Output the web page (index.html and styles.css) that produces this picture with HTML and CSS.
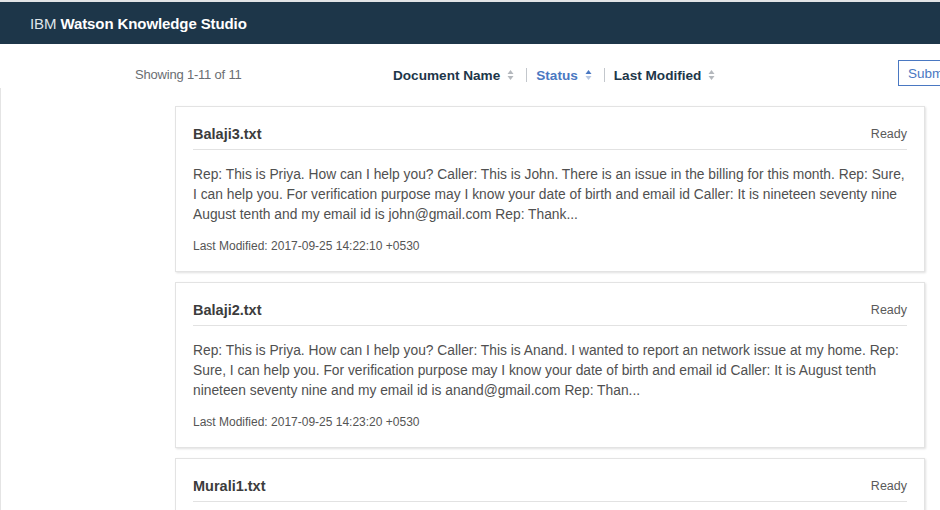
FILE: index.html
```html
<!DOCTYPE html>
<html>
<head>
<meta charset="utf-8">
<link rel="stylesheet" href="styles.css">
</head>
<body>
<header class="topbar">
  <span class="brand"><span class="brand-ibm">IBM</span> <strong>Watson Knowledge Studio</strong></span>
</header>
<div class="toolbar">
  <div class="count">Showing 1-11 of 11</div>
  <div class="sorts">
    <span class="sort">Document Name <svg class="arr" viewBox="0 0 7 12" width="7" height="12"><path d="M3.5 1 L6.5 5 H0.5 Z" fill="#b4b8bd"/><path d="M3.5 11 L6.5 7 H0.5 Z" fill="#b4b8bd"/></svg></span>
    <span class="sep"></span>
    <span class="sort active">Status <svg class="arr" viewBox="0 0 7 12" width="7" height="12"><path d="M3.5 1 L6.5 5 H0.5 Z" fill="#4a78c2"/><path d="M3.5 11 L6.5 7 H0.5 Z" fill="#b8c8e2"/></svg></span>
    <span class="sep"></span>
    <span class="sort">Last Modified <svg class="arr" viewBox="0 0 7 12" width="7" height="12"><path d="M3.5 1 L6.5 5 H0.5 Z" fill="#b4b8bd"/><path d="M3.5 11 L6.5 7 H0.5 Z" fill="#b4b8bd"/></svg></span>
  </div>
  <button class="submit">Submit</button>
</div>
<main class="main">
  <div class="list">
    <article class="card">
      <div class="card-head"><span class="name">Balaji3.txt</span><span class="status">Ready</span></div>
      <p class="body">Rep: This is Priya. How can I help you? Caller: This is John. There is an issue in the billing for this month. Rep: Sure, I can help you. For verification purpose may I know your date of birth and email id Caller: It is nineteen seventy nine August tenth and my email id is john@gmail.com Rep: Thank...</p>
      <div class="meta">Last Modified: 2017-09-25 14:22:10 +0530</div>
    </article>
    <article class="card">
      <div class="card-head"><span class="name">Balaji2.txt</span><span class="status">Ready</span></div>
      <p class="body">Rep: This is Priya. How can I help you? Caller: This is Anand. I wanted to report an network issue at my home. Rep: Sure, I can help you. For verification purpose may I know your date of birth and email id Caller: It is August tenth nineteen seventy nine and my email id is anand@gmail.com Rep: Than...</p>
      <div class="meta">Last Modified: 2017-09-25 14:23:20 +0530</div>
    </article>
    <article class="card">
      <div class="card-head"><span class="name">Murali1.txt</span><span class="status">Ready</span></div>
    </article>
  </div>
</main>
</body>
</html>
```

FILE: styles.css
```css
html, body {
  margin: 0;
  padding: 0;
  background: #ffffff;
  overflow: hidden;
  width: 940px;
  height: 510px;
}
body {
  font-family: "Liberation Sans", Arial, sans-serif;
  color: #4a4a4a;
  border-top: 2px solid #e2e4e6;
  box-sizing: border-box;
}
.topbar {
  height: 42px;
  background: #1d3649;
  display: flex;
  align-items: center;
  padding-left: 30px;
  box-sizing: border-box;
}
.brand {
  color: #ffffff;
  font-size: 15px;
  letter-spacing: -0.1px;
}
.brand-ibm {
  font-weight: 300;
  color: #dfe5ea;
}
.brand strong {
  font-weight: 700;
}
.toolbar {
  height: 44px;
  box-sizing: border-box;
  padding-top: 23px;
  display: flex;
  align-items: flex-start;
  position: relative;
  overflow: hidden;
}
.count {
  margin-left: 135px;
  width: 258px;
  font-size: 13px;
  line-height: 16px;
  color: #6a6e72;
  letter-spacing: -0.2px;
}
.sorts {
  display: flex;
  align-items: center;
  height: 16px;
  font-size: 13.6px;
  font-weight: 700;
  color: #1d3649;
}
.sort {
  display: flex;
  align-items: center;
  gap: 7px;
}
.sort.active {
  color: #4a78c2;
}
.arr {
  display: block;
}
.sep {
  width: 1px;
  height: 14px;
  background: #c3c7cc;
  margin: 0 9px 0 12px;
}
.submit {
  position: absolute;
  left: 898px;
  top: 16px;
  height: 26px;
  width: 80px;
  border: 1px solid #4a78c2;
  background: #fff;
  color: #4a78c2;
  font-family: "Liberation Sans", Arial, sans-serif;
  font-size: 13.5px;
  text-align: left;
  padding: 0 9px;
}
.main {
  border-left: 1px solid #e4e4e4;
  height: 422px;
  box-sizing: border-box;
  overflow: hidden;
}
.list {
  padding: 18px 0 0 174px;
  display: flex;
  flex-direction: column;
  gap: 10px;
  width: 750px;
}
.card {
  border: 1px solid #e3e3e3;
  box-shadow: 1px 1px 2px rgba(0,0,0,0.12);
  padding: 18px 17px 17px 17px;
  background: #fff;
}
.card-head {
  display: flex;
  justify-content: space-between;
  align-items: center;
  height: 18px;
  padding-bottom: 6px;
  border-bottom: 1px solid #e2e2e2;
}
.name {
  font-size: 14.5px;
  font-weight: 700;
  color: #3c3c3c;
}
.status {
  font-size: 12.5px;
  color: #5a5a5a;
}
.body {
  margin: 15px 0 0 0;
  font-size: 13.8px;
  line-height: 20px;
  color: #505050;
}
.meta {
  margin-top: 13px;
  font-size: 12px;
  line-height: 16px;
  color: #555;
}
```
